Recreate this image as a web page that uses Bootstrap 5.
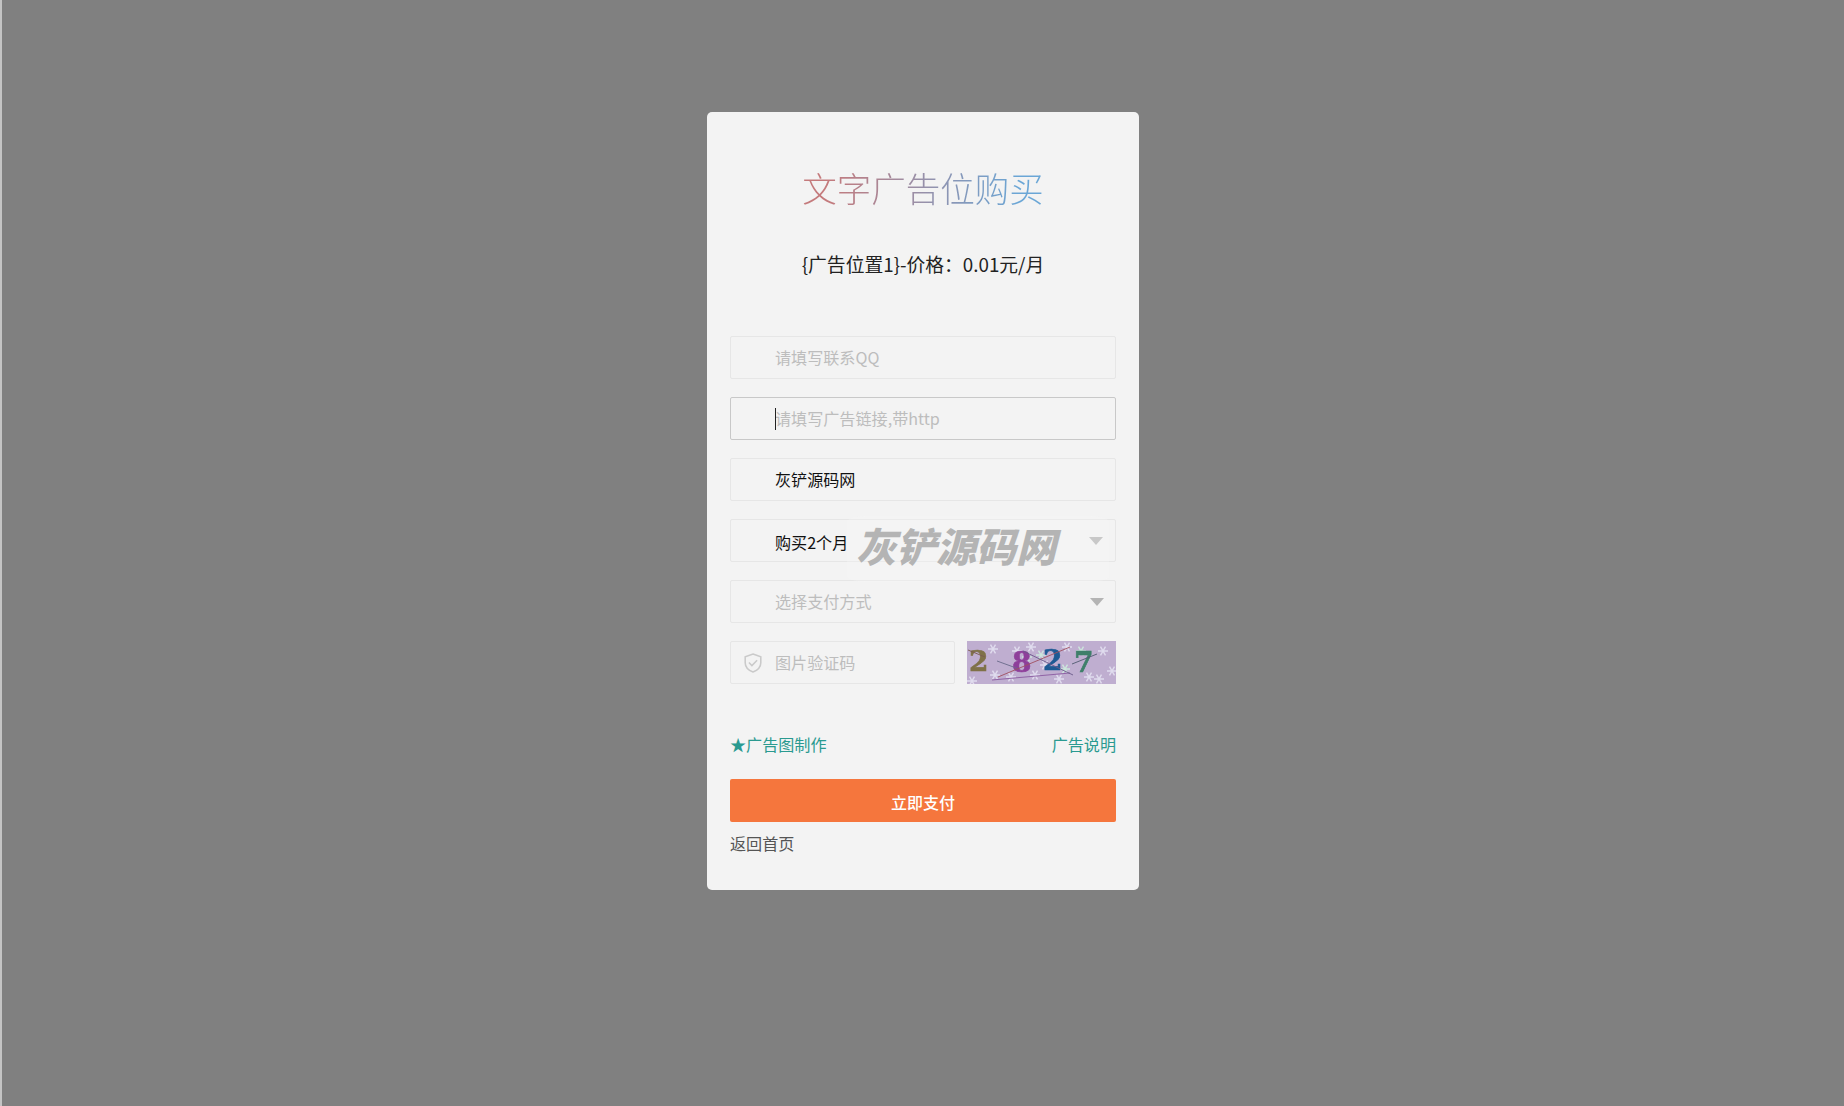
<!DOCTYPE html>
<html lang="zh-CN">
<head>
<meta charset="utf-8">
<title>文字广告位购买</title>
<link href="https://cdn.jsdelivr.net/npm/bootstrap@5.3.0/dist/css/bootstrap.min.css" rel="stylesheet">
<style>
html,body{height:100%}
body{background:#808080;border-left:2px solid #c4c4c4;font-family:"Noto Sans CJK SC","Liberation Sans",sans-serif;font-size:16px}
.stage{padding-top:112px;min-height:100%}
.buy-card{width:432px;height:778px;background:#f3f3f3;border-radius:5px;padding:0 23px;position:relative}
.buy-title{margin:0;padding-top:50px;font-size:34.5px;line-height:50px;font-weight:300;text-align:center;background:linear-gradient(90deg,#c47a7c 25%,#6aa6d6 75%);-webkit-background-clip:text;background-clip:text;color:transparent}
.buy-sub{margin:0;padding-top:37px;font-size:18.8px;line-height:30px;text-align:center;color:#222;height:124px}
.field{height:43px;margin-bottom:18px;position:relative}
.field .form-control,.field .form-select{height:43px;border-radius:2px;border:1px solid #e6e6e6;background-color:#f3f3f3;padding:0 30px 2px 44px;font-size:16.1px;color:#111;box-shadow:none}
.field .form-control::placeholder{color:#bdbdbd;opacity:1}
.field .form-select{background-image:url("data:image/svg+xml,%3Csvg xmlns='http://www.w3.org/2000/svg' width='14' height='8'%3E%3Cpath d='M0 0h14L7 8z' fill='%23b4b4b4'/%3E%3C/svg%3E");background-size:14px 8px;background-position:right 12px center;padding-top:3px;padding-bottom:0}
.field .form-select.empty{color:#bdbdbd;padding-top:0;background-position:right 11px center}
.field .form-control.active-field{border-color:#c8c8c8}
.caret-mark{position:absolute;left:45px;top:11px;width:1px;height:22px;background:#222}
.shield{position:absolute;left:11px;top:10px}
.code-input{width:225px}
.code-img{width:149px;height:43px;display:block;flex:none;filter:blur(.45px)}
.code-img text{font-family:"DejaVu Serif","Liberation Serif",serif;font-weight:700;font-size:28px;stroke-width:.6px}
.link-line{margin-top:45px;height:30px;line-height:30px}
.link-line a{color:#2a9a90;text-decoration:none;font-size:16.1px}
.pay-btn{margin-top:20px;height:43px;background:#f5763d;border:0;border-radius:2px;color:#fff;font-size:16px;font-weight:500;padding:2px 0 0}
.pay-btn:hover{background:#f5763d;color:#fff}
.back-link{display:block;margin-top:6px;line-height:30px;color:#555;text-decoration:none;font-size:16.1px}
.wm-zone{position:absolute;left:140px;top:404px;width:262px;height:66px;background:rgba(250,250,250,.3);border-radius:20px/6px;pointer-events:none}
.wm-text{position:absolute;left:9px;top:4px;font-size:40px;line-height:50px;font-weight:900;font-style:italic;color:#b4b4b4;white-space:nowrap}
</style>
</head>
<body>
<div class="stage d-flex justify-content-center align-items-start">
  <div class="buy-card">
    <h1 class="buy-title">文字广告位购买</h1>
    <p class="buy-sub">{广告位置1}-价格：0.01元/月</p>
    <form>
      <div class="field"><input class="form-control" placeholder="请填写联系QQ"></div>
      <div class="field"><input class="form-control active-field" placeholder="请填写广告链接,带http"><span class="caret-mark"></span></div>
      <div class="field"><input class="form-control" value="灰铲源码网"></div>
      <div class="field"><select class="form-select"><option>购买2个月</option></select></div>
      <div class="field"><select class="form-select empty"><option>选择支付方式</option></select></div>
      <div class="field d-flex justify-content-between">
        <div class="position-relative code-input">
          <input class="form-control" placeholder="图片验证码">
          <svg class="shield" width="24" height="24" viewBox="0 0 20 20" fill="none" stroke="#cacaca" stroke-width="1.3"><path d="M10 2.5l6.5 2.4v4.8c0 3.8-2.8 6.3-6.5 7.8-3.7-1.5-6.5-4-6.5-7.8V4.9z"/><path d="M6.6 9.6l2.5 2.5 4.3-4.4"/></svg>
        </div>
        <svg class="code-img" viewBox="0 0 149 43">
          <defs><g id="flk" stroke-width="1.4"><path d="M-5 0h10M-2.5-4.3l5 8.6M2.5-4.3l-5 8.6"/></g></defs>
          <rect width="149" height="43" fill="#bfaed0"/>
          <g stroke="#e0dcee">
            <use href="#flk" x="26" y="8"/><use href="#flk" x="44" y="36"/><use href="#flk" x="50" y="10"/><use href="#flk" x="64" y="6"/><use href="#flk" x="78" y="24"/><use href="#flk" x="100" y="6"/><use href="#flk" x="122" y="36"/><use href="#flk" x="136" y="10"/><use href="#flk" x="145" y="30"/><use href="#flk" x="5" y="40"/><use href="#flk" x="92" y="38"/><use href="#flk" x="68" y="34"/><use href="#flk" x="28" y="34"/><use href="#flk" x="132" y="38"/>
          </g>
          <g stroke="#cce6dc"><use href="#flk" x="60" y="16"/><use href="#flk" x="114" y="10"/><use href="#flk" x="98" y="28"/><use href="#flk" x="74" y="14"/></g>
          <text x="2" y="30" fill="#7f7148" stroke="#7f7148">2</text>
          <text x="45" y="31" fill="#8e3f9a" stroke="#8e3f9a">8</text>
          <text x="76" y="29" fill="#1e5a94" stroke="#1e5a94">2</text>
          <text x="107" y="31" fill="#3f7f6a" stroke="#3f7f6a">7</text>
          <g stroke-width=".9" fill="none"><path d="M1 9l17 7" stroke="#7a5a50"/><path d="M30 20l22 8" stroke="#6a6a8a"/><path d="M25 39l78-7" stroke="#8a5aa0"/><path d="M31 36l72-30" stroke="#a05060"/><path d="M56 10l50 24" stroke="#6a5a8a"/><path d="M105 23l25-10" stroke="#505a70"/></g>
        </svg>
      </div>
      <div class="link-line d-flex justify-content-between">
        <a href="#">★广告图制作</a>
        <a href="#">广告说明</a>
      </div>
      <button type="button" class="btn pay-btn w-100">立即支付</button>
      <a class="back-link" href="#">返回首页</a>
    </form>
    <div class="wm-zone"><span class="wm-text">灰铲源码网</span></div>
  </div>
</div>
<script src="https://cdn.jsdelivr.net/npm/bootstrap@5.3.0/dist/js/bootstrap.bundle.min.js"></script>
</body>
</html>
